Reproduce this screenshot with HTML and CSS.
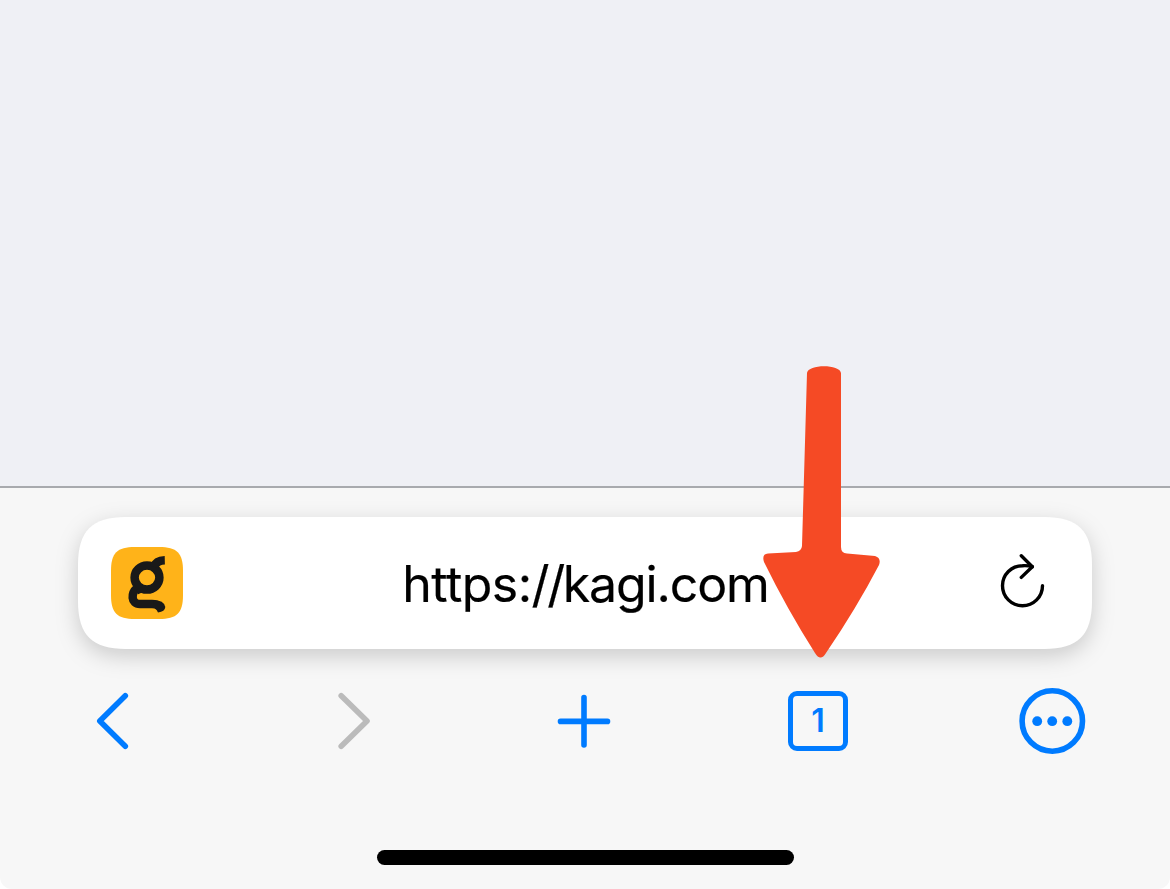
FILE: index.html
```html
<!DOCTYPE html>
<html lang="en">
<head>
<meta charset="utf-8">
<title>Browser toolbar</title>
<link rel="stylesheet" href="styles.css">
</head>
<body>
<div class="screen">
  <main class="page"></main>
  <footer class="chrome">
    <div class="address-shadow">
      <div class="address">
        <svg class="favicon" viewBox="0 0 72 72">
          <path fill="#ffb319" d="M24 0H48C66 0 72 6 72 24V48C72 66 66 72 48 72H24C6 72 0 66 0 48V24C0 6 6 0 24 0Z"/>
          <g fill="none" stroke="#191919" stroke-width="8.500">
            <ellipse cx="36" cy="30.600" rx="12.400" ry="12"/>
            <path d="M43 20Q45 13.500 53.800 13.300"/>
            <path d="M26 41C20 46 19.500 57 29 57H41C46 57 47 58.500 48.500 60" stroke-linejoin="round"/>
            <path d="M26 45Q32 42 36 42.700" stroke-width="5"/>
          </g>
          <path fill="#191919" d="M42 53Q53 53 54.300 60Q54 64.500 47 65.500L44 60Z"/>
        </svg>
        <span class="url"><span class="scheme">https:</span><span class="slashes">//</span>kagi.com</span>
        <svg class="reload" viewBox="0 0 46 56">
          <g fill="none" stroke="#000" stroke-width="3.400" stroke-linecap="round" stroke-linejoin="round">
            <path d="M42.500 31.700A20 20 0 1 1 22.500 11.700Q28 11.300 32.300 12.700"/>
            <path d="M21.300 1.800L32.300 12.700L21.300 23.400"/>
          </g>
        </svg>
      </div>
    </div>
    <nav class="tools">
      <svg class="tool" viewBox="0 0 70 70"><path class="line" d="M44.300 10.700L18.800 36L44.300 61.300"/></svg>
      <svg class="tool" viewBox="0 0 70 70"><path class="line disabled" d="M26.200 10.700L52 36L26.200 61.300"/></svg>
      <svg class="tool" viewBox="0 0 70 70"><path class="line" d="M11.500 36.400H58.500M35 12.500V60"/></svg>
      <span class="tool"><span class="tabs">1</span></span>
      <svg class="tool" viewBox="0 0 70 70">
        <circle class="ring" cx="35.300" cy="36" r="30.200"/>
        <g class="dots"><circle cx="20.200" cy="36.200" r="4.900"/><circle cx="35.200" cy="36.200" r="4.900"/><circle cx="50.300" cy="36.200" r="4.900"/></g>
      </svg>
    </nav>
    <div class="home-bar"></div>
  </footer>
  <svg class="arrow" viewBox="0 0 120 298">
    <path d="M45 10C46 1 78 1 79 10V184Q79 190 85 190.500L113 193Q119.500 195 117 202Q94 246 64 290Q58.500 299 53 290Q25 246 2 199Q-.5 191 6 190.500L34 189Q39.500 188 40 183Z"/>
  </svg>
</div>
</body>
</html>
```
FILE: styles.css
```css
* { box-sizing: border-box; }

body {
  margin: 0;
  background: #fff;
  font-family: Inter, "Liberation Sans", sans-serif;
}

.screen {
  position: relative;
  display: flex;
  flex-direction: column;
  width: 1170px;
  height: 889px;
  overflow: hidden;
}

.page {
  height: 486px;
  background: #eff0f5;
}

.chrome {
  display: flex;
  flex: 1;
  flex-direction: column;
  align-items: center;
  padding-top: 29px;
  border-top: 2px solid #a8aaae;
  border-radius: 0 0 12px 12px;
  background: #f7f7f7;
}

.address-shadow {
  filter: drop-shadow(0 7px 11px rgb(0 0 0 / 18%));
}

.address {
  display: flex;
  align-items: center;
  justify-content: space-between;
  width: 1014px;
  height: 132px;
  padding: 0 46px 0 33px;
  background: #fff;
  clip-path: path("M48 0H966C1000 0 1014 14 1014 48V84C1014 118 1000 132 966 132H48C14 132 0 118 0 84V48C0 14 14 0 48 0Z");
}

.favicon {
  width: 72px;
  height: 72px;
}

.url {
  margin: 2px 12px 0 0;
  color: #000;
  font-size: 50px;
  line-height: 60px;
  letter-spacing: -1.15px;
  white-space: nowrap;
  -webkit-text-stroke: 0.2px #000;
}

.scheme { letter-spacing: -0.55px; }

.slashes { letter-spacing: -2.4px; }

.reload {
  width: 46px;
  height: 56px;
  margin-bottom: 3px;
}

.tools {
  display: flex;
  justify-content: space-between;
  width: 1006px;
  margin: 36px 2px 0 0;
}

.tool {
  display: flex;
  align-items: center;
  justify-content: center;
  width: 70px;
  height: 70px;
}

.line,
.ring {
  fill: none;
  stroke: #007bff;
  stroke-width: 5.6px;
  stroke-linecap: round;
  stroke-linejoin: round;
}

.disabled { stroke: #bbb; }

.dots { fill: #007bff; }

.tabs {
  width: 60px;
  height: 60px;
  margin-top: 2px;
  border: 5px solid #007bff;
  border-radius: 9px;
  color: #007bff;
  font-size: 32px;
  font-weight: 600;
  line-height: 49px;
  text-align: center;
}

.home-bar {
  width: 417px;
  height: 15px;
  margin-top: 95px;
  border-radius: 8px;
  background: #000;
}

.arrow {
  position: absolute;
  top: 363px;
  left: 762px;
  width: 120px;
  height: 298px;
  fill: #f54a25;
}
```
